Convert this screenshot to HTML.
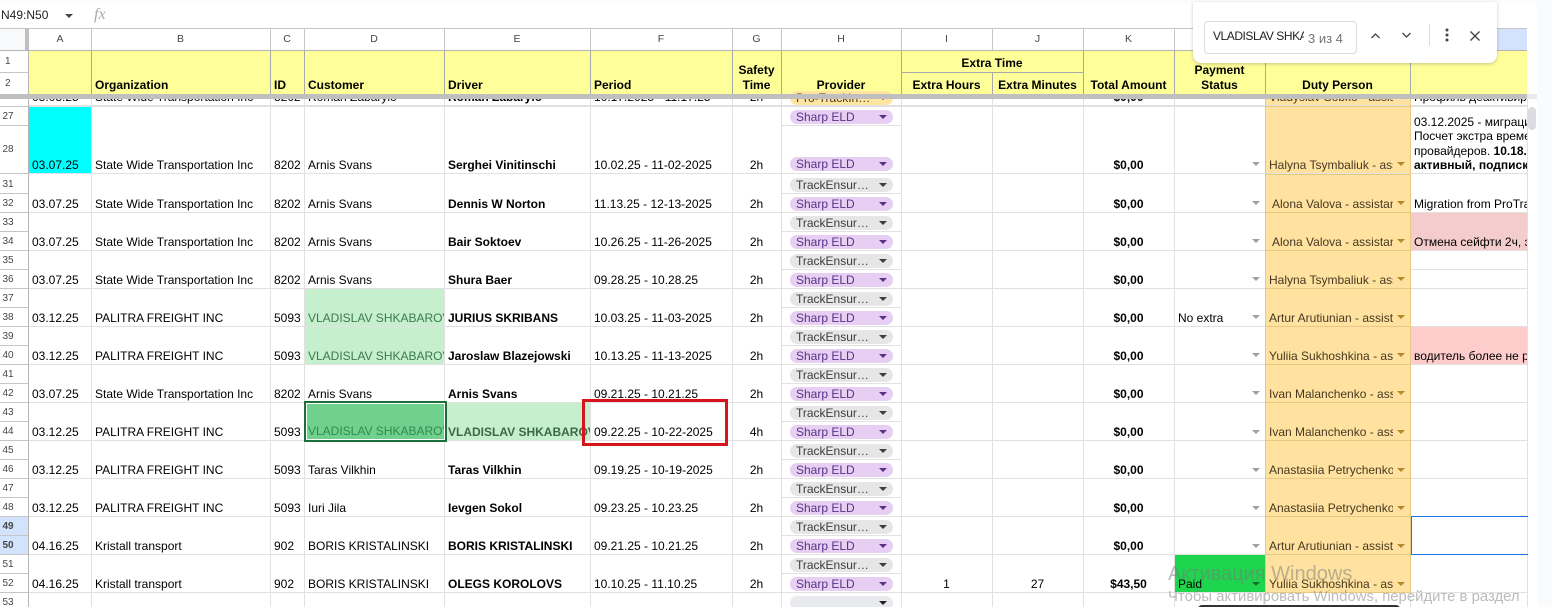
<!DOCTYPE html>
<html><head><meta charset="utf-8"><style>
html,body{margin:0;padding:0}
body{width:1552px;height:607px;position:relative;overflow:hidden;background:#fff;font:12px "Liberation Sans","Noto Sans CJK SC",sans-serif;color:#000}
#w{position:absolute;left:0;top:0;width:1552px;height:607px;overflow:hidden}
.x{position:absolute}
.v{position:absolute;top:99px;height:508px;width:1px;background:#e1e1e1}
.hv{position:absolute;top:51px;height:43px;width:1px;background:#a9a9a9}
.cv{position:absolute;top:28px;height:22px;width:1px;background:#c4c7c5}
.cl{position:absolute;top:28px;height:22px;line-height:23px;text-align:center;font-size:10.5px;color:#444746}
.hd{position:absolute;font-weight:bold;line-height:15px;height:15px;white-space:nowrap;color:#000}
.hc{text-align:center}
.rn{position:absolute;left:0;width:28px;height:18px;border-bottom:1px solid #c4c7c5;background:#fff}
.rn span{position:absolute;left:-6px;width:28px;text-align:center;font-size:10px;color:#444746;line-height:19px;top:0}
.r{position:absolute;height:37px;border-bottom:1px solid #e1e1e1;left:0;width:1527px}
.r>*{position:absolute;bottom:-2px;height:19px;line-height:19px;overflow:hidden;white-space:nowrap;font-style:normal;font-weight:normal}
.a{left:32px}.b{left:95px}.c{left:274px}.d{left:308px;width:136px}
.r>.e{left:448px;width:142px;font-weight:bold}.f{left:594px}
.g{left:732px;width:49px;text-align:center}
.i{left:901px;width:91px;text-align:center}.j{left:992px;width:91px;text-align:center}
.r>.k{left:1083px;width:91px;text-align:center;font-weight:bold}
.l{left:1178px;width:70px}
.m{left:1269px;width:124px;color:#473821}
.n{left:1414px;width:113px}
.tri{position:absolute;width:0;height:0;margin-top:1px;border-left:4px solid transparent;border-right:4px solid transparent;border-top:4px solid #9aa0a6}
.chip{position:absolute;left:790px;width:103px;height:14px;border-radius:7px;line-height:15px;font-size:12px;text-indent:6px;overflow:hidden;white-space:nowrap}
.chip:after{content:"";position:absolute;right:6px;top:5px;width:0;height:0;border-left:4px solid transparent;border-right:4px solid transparent;border-top:4px solid currentColor}
.s{background:#e6cff2;color:#5a3286}
.t{background:#e6e6e6;color:#3d3d3d}
.hl{position:absolute;left:781px;width:120px;height:1px;background:#e1e1e1}
.dg{color:#3b7a4d}
.ma{position:absolute;left:1397px;border-top-color:#b5892a}
</style></head><body><div id="w">

<!-- top bar -->
<div class="x" style="left:0;top:0;width:1552px;height:3px;background:#f9fbfd"></div>
<div class="x" style="left:1px;top:7px;line-height:16px;font-size:12px;color:#1f1f1f">N49:N50</div>
<div class="tri" style="left:65px;top:13px;border-top-color:#444746"></div>
<div class="x" style="left:94px;top:6px;font:italic 16px 'Liberation Serif',serif;color:#a8aaa9;line-height:18px">fx</div>
<div class="x" style="left:0;top:28px;width:1527px;height:1px;background:#c4c7c5"></div>
<div class="x" style="left:1537px;top:3px;width:15px;height:604px;background:#f9fbfd"></div>

<!-- corner + column headers -->
<div class="x" style="left:0;top:29px;width:25px;height:21px;background:#f8f9fa"></div>
<div class="x" style="left:25px;top:29px;width:4px;height:22px;background:#bfbfbf"></div>
<div class="x" style="left:1410px;top:29px;width:117px;height:21px;background:#d3e3fd"></div>
<div class="cl" style="left:29px;width:62px">A</div><div class="cl" style="left:91px;width:179px">B</div><div class="cl" style="left:270px;width:34px">C</div><div class="cl" style="left:304px;width:140px">D</div><div class="cl" style="left:444px;width:146px">E</div><div class="cl" style="left:590px;width:142px">F</div><div class="cl" style="left:732px;width:49px">G</div><div class="cl" style="left:781px;width:120px">H</div><div class="cl" style="left:901px;width:91px">I</div><div class="cl" style="left:992px;width:91px">J</div><div class="cl" style="left:1083px;width:91px">K</div>
<div class="cv" style="left:91px"></div><div class="cv" style="left:270px"></div><div class="cv" style="left:304px"></div><div class="cv" style="left:444px"></div><div class="cv" style="left:590px"></div><div class="cv" style="left:732px"></div><div class="cv" style="left:781px"></div><div class="cv" style="left:901px"></div><div class="cv" style="left:992px"></div><div class="cv" style="left:1083px"></div><div class="cv" style="left:1174px"></div><div class="cv" style="left:1265px"></div><div class="cv" style="left:1410px"></div>

<!-- yellow header -->
<div class="x" style="left:29px;top:51px;width:1498px;height:43px;background:#ffff99"></div>
<div class="x" style="left:0;top:50px;width:1527px;height:1px;background:#b5b5b5"></div>
<div class="hv" style="left:91px"></div><div class="hv" style="left:270px"></div><div class="hv" style="left:304px"></div><div class="hv" style="left:444px"></div><div class="hv" style="left:590px"></div><div class="hv" style="left:732px"></div><div class="hv" style="left:781px"></div><div class="hv" style="left:901px"></div><div class="hv" style="left:992px;top:72px;height:22px"></div><div class="hv" style="left:1083px"></div><div class="hv" style="left:1174px"></div><div class="hv" style="left:1265px"></div><div class="hv" style="left:1410px"></div>
<div class="x" style="left:901px;top:72px;width:182px;height:1px;background:#a9a9a9"></div>
<div class="hd" style="left:95px;top:78px">Organization</div>
<div class="hd" style="left:274px;top:78px">ID</div>
<div class="hd" style="left:308px;top:78px">Customer</div>
<div class="hd" style="left:448px;top:78px">Driver</div>
<div class="hd" style="left:594px;top:78px">Period</div>
<div class="hd hc" style="left:732px;width:49px;top:63px">Safety</div>
<div class="hd hc" style="left:732px;width:49px;top:78px">Time</div>
<div class="hd hc" style="left:781px;width:120px;top:78px">Provider</div>
<div class="hd hc" style="left:901px;width:182px;top:56px">Extra Time</div>
<div class="hd hc" style="left:901px;width:91px;top:78px">Extra Hours</div>
<div class="hd hc" style="left:992px;width:91px;top:78px">Extra Minutes</div>
<div class="hd hc" style="left:1083px;width:91px;top:78px">Total Amount</div>
<div class="hd hc" style="left:1174px;width:91px;top:63px">Payment</div>
<div class="hd hc" style="left:1174px;width:91px;top:78px">Status</div>
<div class="hd hc" style="left:1265px;width:145px;top:78px">Duty Person</div>

<!-- coloured cell backgrounds -->
<div class="x" style="left:1265px;top:99px;width:145px;height:493px;background:#ffe29f"></div>
<div class="x" style="left:29px;top:106px;width:62px;height:68px;background:#00ffff"></div>
<div class="x" style="left:1410px;top:212px;width:117px;height:38px;background:#f4cccc"></div>
<div class="x" style="left:1410px;top:326px;width:117px;height:38px;background:#ffcccc"></div>
<div class="x" style="left:1174px;top:554px;width:91px;height:38px;background:#1ed64e"></div>
<div class="x" style="left:304px;top:288px;width:140px;height:76px;background:#c6efce"></div>
<div class="x" style="left:445px;top:402px;width:145px;height:38px;background:#c6efce"></div>

<!-- rows -->
<div class="x" style="left:0;top:99px;width:1527px;height:8px;overflow:hidden">
<div class="r" style="top:-31px"><i class="a">03.03.25</i><i class="b">State Wide Transportation Inc</i><i class="c">8202</i><i class="d">Roman Zabarylo</i><b class="e">Roman Zabarylo</b><i class="f">10.17.2025 - 11.17.25</i><i class="g">2h</i><b class="k">$0,00</b><i class="m">Vladyslav Sobko - assist</i><i class="n">Профиль деактивирован</i></div>
</div>
<div class="x" style="left:0;top:106px;width:1527px;height:1px;background:#e1e1e1"></div>
<div class="r" style="top:107px;height:66px"><i class="a">03.07.25</i><i class="b">State Wide Transportation Inc</i><i class="c">8202</i><i class="d">Arnis Svans</i><b class="e">Serghei Vinitinschi</b><i class="f">10.02.25 - 11-02-2025</i><i class="g">2h</i><b class="k">$0,00</b><i class="m">Halyna Tsymbaliuk - assistant</i></div>
<div class="r" style="top:175px"><i class="a">03.07.25</i><i class="b">State Wide Transportation Inc</i><i class="c">8202</i><i class="d">Arnis Svans</i><b class="e">Dennis W Norton</b><i class="f">11.13.25 - 12-13-2025</i><i class="g">2h</i><b class="k">$0,00</b><i class="m" style="left:1272px;width:121px">Alona Valova - assistant</i><i class="n">Migration from ProTrackin</i></div>
<div class="r" style="top:213px"><i class="a">03.07.25</i><i class="b">State Wide Transportation Inc</i><i class="c">8202</i><i class="d">Arnis Svans</i><b class="e">Bair Soktoev</b><i class="f">10.26.25 - 11-26-2025</i><i class="g">2h</i><b class="k">$0,00</b><i class="m" style="left:1272px;width:121px">Alona Valova - assistant</i><i class="n">Отмена сейфти 2ч, экстра</i></div>
<div class="r" style="top:251px"><i class="a">03.07.25</i><i class="b">State Wide Transportation Inc</i><i class="c">8202</i><i class="d">Arnis Svans</i><b class="e">Shura Baer</b><i class="f">09.28.25 - 10.28.25</i><i class="g">2h</i><b class="k">$0,00</b><i class="m">Halyna Tsymbaliuk - assistant</i></div>
<div class="r" style="top:289px"><i class="a">03.12.25</i><i class="b">PALITRA FREIGHT INC</i><i class="c">5093</i><i class="d dg">VLADISLAV SHKABAROV</i><b class="e">JURIUS SKRIBANS</b><i class="f">10.03.25 - 11-03-2025</i><i class="g">2h</i><b class="k">$0,00</b><i class="l">No extra</i><i class="m">Artur Arutiunian - assistant</i></div>
<div class="r" style="top:327px"><i class="a">03.12.25</i><i class="b">PALITRA FREIGHT INC</i><i class="c">5093</i><i class="d dg">VLADISLAV SHKABAROV</i><b class="e">Jaroslaw Blazejowski</b><i class="f">10.13.25 - 11-13-2025</i><i class="g">2h</i><b class="k">$0,00</b><i class="m">Yuliia Sukhoshkina - assistant</i><i class="n">водитель более не работает</i></div>
<div class="r" style="top:365px"><i class="a">03.07.25</i><i class="b">State Wide Transportation Inc</i><i class="c">8202</i><i class="d">Arnis Svans</i><b class="e">Arnis Svans</b><i class="f">09.21.25 - 10.21.25</i><i class="g">2h</i><b class="k">$0,00</b><i class="m">Ivan Malanchenko - assistant</i></div>
<div class="r" style="top:403px"><i class="a">03.12.25</i><i class="b">PALITRA FREIGHT INC</i><i class="c">5093</i><b class="e dg" style="left:448px;color:#3b6b45">VLADISLAV SHKABAROV</b><i class="f">09.22.25 - 10-22-2025</i><i class="g">4h</i><b class="k">$0,00</b><i class="m">Ivan Malanchenko - assistant</i></div>
<div class="r" style="top:441px"><i class="a">03.12.25</i><i class="b">PALITRA FREIGHT INC</i><i class="c">5093</i><i class="d">Taras Vilkhin</i><b class="e">Taras Vilkhin</b><i class="f">09.19.25 - 10-19-2025</i><i class="g">2h</i><b class="k">$0,00</b><i class="m">Anastasiia Petrychenko - assistant</i></div>
<div class="r" style="top:479px"><i class="a">03.12.25</i><i class="b">PALITRA FREIGHT INC</i><i class="c">5093</i><i class="d">Iuri Jila</i><b class="e">Ievgen Sokol</b><i class="f">09.23.25 - 10.23.25</i><i class="g">2h</i><b class="k">$0,00</b><i class="m">Anastasiia Petrychenko - assistant</i></div>
<div class="r" style="top:517px"><i class="a">04.16.25</i><i class="b">Kristall transport</i><i class="c">902</i><i class="d">BORIS KRISTALINSKI</i><b class="e">BORIS KRISTALINSKI</b><i class="f">09.21.25 - 10.21.25</i><i class="g">2h</i><b class="k">$0,00</b><i class="m">Artur Arutiunian - assistant</i></div>
<div class="r" style="top:555px"><i class="a">04.16.25</i><i class="b">Kristall transport</i><i class="c">902</i><i class="d">BORIS KRISTALINSKI</i><b class="e">OLEGS KOROLOVS</b><i class="f">10.10.25 - 11.10.25</i><i class="g">2h</i><i class="i">1</i><i class="j">27</i><b class="k">$43,50</b><i class="l">Paid</i><i class="m">Yuliia Sukhoshkina - assistant</i></div>

<!-- N col multi-line -->
<div class="x" style="left:1414px;top:115px;width:113px;overflow:hidden;white-space:nowrap;line-height:14.4px">03.12.2025 - миграция<br>Посчет экстра времени<br>провайдеров. <b>10.18.2025</b><br><b>активный, подписка</b></div>
<div class="x" style="left:1410px;top:269px;width:117px;height:1px;background:#e1e1e1"></div>

<!-- vertical grid lines -->
<div class="v" style="left:91px"></div><div class="v" style="left:270px"></div><div class="v" style="left:304px"></div><div class="v" style="left:444px"></div><div class="v" style="left:590px"></div><div class="v" style="left:732px"></div><div class="v" style="left:781px"></div><div class="v" style="left:901px"></div><div class="v" style="left:992px"></div><div class="v" style="left:1083px"></div><div class="v" style="left:1174px"></div><div class="v" style="left:1527px"></div>
<div class="v" style="left:1265px;height:493px;background:#e8c983"></div><div class="v" style="left:1410px;height:493px;background:#e8c983"></div>
<div class="v" style="left:1410px;top:592px;height:15px"></div><div class="v" style="left:1265px;top:592px;height:15px"></div>
<div class="x" style="left:1265px;top:592px;width:146px;height:1px;background:#e8c983"></div>
<div class="x" style="left:1265px;top:106px;width:146px;height:1px;background:#e8c983"></div><div class="x" style="left:1265px;top:174px;width:146px;height:1px;background:#e8c983"></div><div class="x" style="left:1265px;top:212px;width:146px;height:1px;background:#e8c983"></div><div class="x" style="left:1265px;top:250px;width:146px;height:1px;background:#e8c983"></div><div class="x" style="left:1265px;top:288px;width:146px;height:1px;background:#e8c983"></div><div class="x" style="left:1265px;top:326px;width:146px;height:1px;background:#e8c983"></div><div class="x" style="left:1265px;top:364px;width:146px;height:1px;background:#e8c983"></div><div class="x" style="left:1265px;top:402px;width:146px;height:1px;background:#e8c983"></div><div class="x" style="left:1265px;top:440px;width:146px;height:1px;background:#e8c983"></div><div class="x" style="left:1265px;top:478px;width:146px;height:1px;background:#e8c983"></div><div class="x" style="left:1265px;top:516px;width:146px;height:1px;background:#e8c983"></div><div class="x" style="left:1265px;top:554px;width:146px;height:1px;background:#e8c983"></div>

<!-- H col hairlines -->
<div class="hl" style="top:125px"></div><div class="hl" style="top:193px"></div><div class="hl" style="top:231px"></div><div class="hl" style="top:269px"></div><div class="hl" style="top:307px"></div><div class="hl" style="top:345px"></div><div class="hl" style="top:383px"></div><div class="hl" style="top:421px"></div><div class="hl" style="top:459px"></div><div class="hl" style="top:497px"></div><div class="hl" style="top:535px"></div><div class="hl" style="top:573px"></div>

<!-- chips -->
<div class="chip" style="top:91px;background:#ffe5a0;color:#473821">Pro-TrackIn…</div>
<div class="chip s" style="top:110px">Sharp ELD</div>
<div class="chip s" style="top:157px">Sharp ELD</div>
<div class="chip t" style="top:178px">TrackEnsur…</div><div class="chip s" style="top:197px">Sharp ELD</div>
<div class="chip t" style="top:216px">TrackEnsur…</div><div class="chip s" style="top:235px">Sharp ELD</div>
<div class="chip t" style="top:254px">TrackEnsur…</div><div class="chip s" style="top:273px">Sharp ELD</div>
<div class="chip t" style="top:292px">TrackEnsur…</div><div class="chip s" style="top:311px">Sharp ELD</div>
<div class="chip t" style="top:330px">TrackEnsur…</div><div class="chip s" style="top:349px">Sharp ELD</div>
<div class="chip t" style="top:368px">TrackEnsur…</div><div class="chip s" style="top:387px">Sharp ELD</div>
<div class="chip t" style="top:406px">TrackEnsur…</div><div class="chip s" style="top:425px">Sharp ELD</div>
<div class="chip t" style="top:444px">TrackEnsur…</div><div class="chip s" style="top:463px">Sharp ELD</div>
<div class="chip t" style="top:482px">TrackEnsur…</div><div class="chip s" style="top:501px">Sharp ELD</div>
<div class="chip t" style="top:520px">TrackEnsur…</div><div class="chip s" style="top:539px">Sharp ELD</div>
<div class="chip t" style="top:558px">TrackEnsur…</div><div class="chip s" style="top:577px">Sharp ELD</div>
<div class="chip" style="top:596px;background:#e8eaed;color:#222"></div>

<!-- L arrows -->
<div class="tri" style="left:1252px;top:161px"></div><div class="tri" style="left:1252px;top:200px"></div><div class="tri" style="left:1252px;top:238px"></div><div class="tri" style="left:1252px;top:276px"></div><div class="tri" style="left:1252px;top:314px"></div><div class="tri" style="left:1252px;top:352px"></div><div class="tri" style="left:1252px;top:390px"></div><div class="tri" style="left:1252px;top:429px"></div><div class="tri" style="left:1252px;top:467px"></div><div class="tri" style="left:1252px;top:505px"></div><div class="tri" style="left:1252px;top:543px"></div><div class="tri" style="left:1252px;top:581px;border-top-color:#176e30"></div>
<!-- M arrows -->
<div class="tri ma" style="top:161px"></div><div class="tri ma" style="top:200px"></div><div class="tri ma" style="top:238px"></div><div class="tri ma" style="top:276px"></div><div class="tri ma" style="top:314px"></div><div class="tri ma" style="top:352px"></div><div class="tri ma" style="top:390px"></div><div class="tri ma" style="top:429px"></div><div class="tri ma" style="top:467px"></div><div class="tri ma" style="top:505px"></div><div class="tri ma" style="top:543px"></div><div class="tri ma" style="top:581px"></div>

<!-- selected cell D43 -->
<div class="x" style="left:304px;top:401px;width:139px;height:37px;border:2px solid #1e6e3c;box-shadow:inset 0 0 0 1px #fff;background:#70d18d;overflow:hidden"><div style="position:absolute;left:2px;bottom:-1px;width:136px;line-height:19px;white-space:nowrap;overflow:hidden;color:#2f8a4f">VLADISLAV SHKABAROV</div></div>
<!-- N49 range -->
<div class="x" style="left:1411px;top:516px;width:116px;height:37px;border:1px solid #1a73e8;border-right:0"></div>

<!-- row headers -->
<div class="x" style="left:0;top:99px;width:28px;height:7px;overflow:hidden;background:#fff"><span style="position:absolute;left:0;width:16px;text-align:center;top:-12px;font-size:10px;line-height:19px;color:#444746">26</span></div>
<div class="x" style="left:0;top:106px;width:28px;height:1px;background:#c4c7c5"></div>
<div class="rn" style="top:107px"><span>27</span></div>
<div class="rn" style="top:126px;height:47px"><span style="line-height:47px">28</span></div>
<div class="rn" style="top:175px"><span>31</span></div><div class="rn" style="top:194px"><span>32</span></div>
<div class="rn" style="top:213px"><span>33</span></div><div class="rn" style="top:232px"><span>34</span></div>
<div class="rn" style="top:251px"><span>35</span></div><div class="rn" style="top:270px"><span>36</span></div>
<div class="rn" style="top:289px"><span>37</span></div><div class="rn" style="top:308px"><span>38</span></div>
<div class="rn" style="top:327px"><span>39</span></div><div class="rn" style="top:346px"><span>40</span></div>
<div class="rn" style="top:365px"><span>41</span></div><div class="rn" style="top:384px"><span>42</span></div>
<div class="rn" style="top:403px"><span>43</span></div><div class="rn" style="top:422px"><span>44</span></div>
<div class="rn" style="top:441px"><span>45</span></div><div class="rn" style="top:460px"><span>46</span></div>
<div class="rn" style="top:479px"><span>47</span></div><div class="rn" style="top:498px"><span>48</span></div>
<div class="rn" style="top:517px;background:#d3e3fd"><span style="font-weight:bold">49</span></div><div class="rn" style="top:536px;background:#d3e3fd"><span style="font-weight:bold">50</span></div>
<div class="rn" style="top:555px"><span>51</span></div><div class="rn" style="top:574px"><span>52</span></div>
<div class="rn" style="top:593px"><span>53</span></div>
<div class="x" style="left:28px;top:51px;width:1px;height:556px;background:#b5b5b5"></div>
<div class="x" style="left:0;top:72px;width:28px;height:1px;background:#c4c7c5"></div>
<div class="x" style="left:0;top:51px;width:28px;height:21px;line-height:21px;font-size:10px;color:#444746;text-indent:5px">1</div>
<div class="x" style="left:0;top:73px;width:28px;height:21px;line-height:21px;font-size:10px;color:#444746;text-indent:5px">2</div>

<!-- freeze bar -->
<div class="x" style="left:0;top:94px;width:1527px;height:5px;background:#bfbfbf"></div>
<div class="x" style="left:1527px;top:94px;width:10px;height:5px;background:#e8eaed"></div>

<!-- scrollbar -->
<div class="x" style="left:1528px;top:107px;width:8px;height:23px;border-radius:4px;background:#dadce0"></div>

<!-- red rectangle -->
<div class="x" style="left:582px;top:399px;width:140px;height:41px;border:3px solid #d5141c"></div>

<!-- find bar -->
<div class="x" style="left:1193px;top:2px;width:304px;height:61px;background:#fff;border-radius:0 0 8px 8px;box-shadow:0 1px 3px rgba(60,64,67,.3)"></div>
<div class="x" style="left:1204px;top:21px;width:151px;height:31px;border:1px solid #dadce0;border-radius:4px"></div>
<div class="x" style="left:1213px;top:28px;width:91px;line-height:17px;overflow:hidden;white-space:nowrap;color:#1f1f1f;letter-spacing:-.45px">VLADISLAV SHKABAROV</div>
<div class="x" style="left:1308px;top:30px;line-height:17px;font-size:13px;color:#70757a;white-space:nowrap">3 из 4</div>
<svg class="x" style="left:1366px;top:26px" width="20" height="20" viewBox="0 0 20 20"><path d="M5.5 12 L9.5 8 L13.5 12" fill="none" stroke="#444746" stroke-width="1.3"/></svg>
<svg class="x" style="left:1397px;top:25px" width="20" height="20" viewBox="0 0 20 20"><path d="M5.5 8 L9.5 12 L13.5 8" fill="none" stroke="#444746" stroke-width="1.3"/></svg>
<div class="x" style="left:1429px;top:24px;width:1px;height:22px;background:#dadce0"></div>
<svg class="x" style="left:1444px;top:27px" width="6" height="16" viewBox="0 0 6 16"><circle cx="3" cy="3" r="1.5" fill="#444746"/><circle cx="3" cy="8" r="1.5" fill="#444746"/><circle cx="3" cy="13" r="1.5" fill="#444746"/></svg>
<svg class="x" style="left:1469px;top:30px" width="12" height="12" viewBox="0 0 12 12"><path d="M1.5 1.5 L10.5 10.5 M10.5 1.5 L1.5 10.5" fill="none" stroke="#444746" stroke-width="1.4"/></svg>

<!-- watermark -->
<div class="x" style="left:1168px;top:562px;font-size:20px;line-height:24px;color:rgba(120,120,120,.5);white-space:nowrap">Активация Windows</div>
<div class="x" style="left:1168px;top:589px;font-size:14.9px;line-height:17px;color:rgba(120,120,120,.5);white-space:nowrap">Чтобы активировать Windows, перейдите в раздел</div>
<div class="x" style="left:1198px;top:605px;width:202px;height:4px;border-radius:4px 4px 0 0;background:#333"></div>
</div></body></html>
